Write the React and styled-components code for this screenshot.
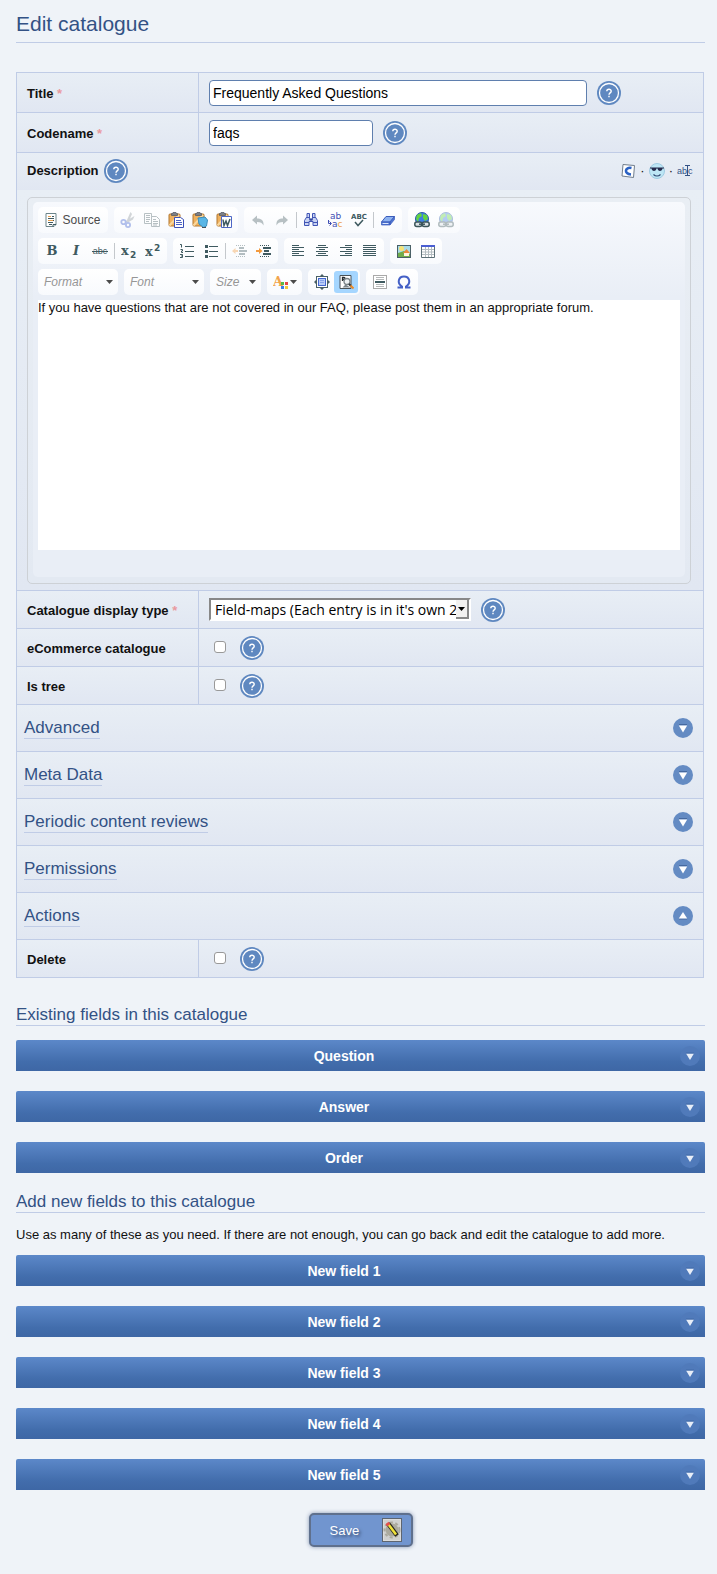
import React from 'react';
import styled, { createGlobalStyle } from 'styled-components';

const GlobalStyle = createGlobalStyle`
  *, *::before, *::after { box-sizing: border-box; }
  body {
    margin: 0;
    background: #eff3f8;
    color: #111;
    font: 13px/16px "Liberation Sans", Arial, sans-serif;
  }
  button, input, select, textarea { font-family: inherit; }
`;

const rowFill = 'linear-gradient(#e8eef5, #e1e7f2)';
const line = '#c0cce6';

const Page = styled.main`
  padding: 12px 12px 26px 16px;
`;

const Heading = styled.h1`
  margin: 0 0 29px;
  padding-bottom: 6px;
  border-bottom: 1px solid ${line};
  color: #335285;
  font-size: 21px;
  line-height: 24px;
  font-weight: 400;
`;

const SubHeading = styled.h2`
  margin: 0;
  border-bottom: 1px solid ${line};
  color: #335285;
  font-size: 17px;
  line-height: 20px;
  font-weight: 400;
`;

const FormPanel = styled.div`
  margin-right: 1px;
  border: 1px solid ${line};
  border-bottom: 0;
`;

const FormRow = styled.div`
  display: grid;
  grid-template-columns: 182px minmax(0, 1fr);
  min-height: ${(p) => (p.$tall ? 40 : 38)}px;
  border-bottom: 1px solid ${line};
  background: ${rowFill};
`;

const LabelCell = styled.div`
  display: flex;
  align-items: center;
  padding: 2px 0 0 10px;
  border-right: 1px solid ${line};
`;

const Label = styled.label`
  font-weight: 700;
`;

const Required = styled.span`
  color: #e99a9f;
`;

const FieldCell = styled.div`
  display: flex;
  align-items: center;
  gap: ${(p) => (p.$check ? 14 : 10)}px;
  padding: 0 ${(p) => (p.$check ? 15 : 10)}px;
`;

const TextInput = styled.input`
  width: ${(p) => p.$width};
  height: 26px;
  padding: 0 3px;
  border: 1px solid #5f7fae;
  border-radius: 4px;
  background: #fff;
  color: #000;
  font-size: 14px;
`;

const Checkbox = styled.input`
  appearance: none;
  width: 12px;
  height: 12px;
  margin: 0 0 2px;
  border: 1px solid #999;
  border-radius: 3px;
  background: #fff;
  &:checked { background: #5f88c0; }
`;

const IconButton = styled.button`
  display: flex;
  padding: 0;
  border: 0;
  background: none;
  cursor: pointer;
`;

const SelectBox = styled.div`
  position: relative;
  width: 262px;
  height: 23px;
`;

const Select = styled.select`
  appearance: none;
  display: block;
  width: 100%;
  height: 100%;
  padding: 0 13px 0 4px;
  border: 2px solid;
  border-color: #888 #fff #fff #888;
  border-radius: 0;
  background: #fff;
  color: #000;
  font: 14px/18px "Open Sans", "Noto Sans", sans-serif;
`;

const SelectArrow = styled.span`
  position: absolute;
  top: 2px;
  right: 2px;
  display: flex;
  justify-content: center;
  width: 13px;
  height: 19px;
  padding-top: 7px;
  border-right: 2px solid #888;
  border-bottom: 2px solid #888;
  background: #f2f1f0;
  pointer-events: none;
`;

const DescriptionHead = styled.div`
  display: flex;
  align-items: center;
  gap: 5px;
  height: 37px;
  padding: 0 10px 1px;
  background: ${rowFill};
`;

const Extras = styled.div`
  display: flex;
  align-items: center;
  gap: 4px;
  margin-left: auto;
`;

const DescriptionBody = styled.div`
  padding: 7px 12px 6px 10px;
  border-bottom: 1px solid ${line};
  background: ${rowFill};
`;

const EditorFrame = styled.div`
  padding: 4px 5px 6px;
  border: 1px solid #cdd1d6;
  border-radius: 5px;
  background: linear-gradient(#e9eef4, #e3e9f2);
`;

const EditorInner = styled.div`
  padding: 5px 5px 27px;
  border-radius: 5px;
  background: linear-gradient(#f7f9fd, #e9eef6 95px);
`;

const ToolbarRow = styled.div`
  display: flex;
  gap: 6px;
  margin-bottom: 5px;
`;

const ToolGroup = styled.div`
  display: flex;
  align-items: center;
  height: 26px;
  padding: 2px;
  border-radius: 5px;
  background: linear-gradient(#fff, #f8fafd);
`;

const Tool = styled.button`
  display: flex;
  align-items: center;
  justify-content: center;
  gap: ${(p) => p.$gap || 0}px;
  width: ${(p) => p.$width || 24}px;
  height: 22px;
  padding: 0;
  border: 0;
  border-radius: 3px;
  background: ${(p) => (p.$on ? '#a5d6ff' : 'none')};
  color: #4b4b4b;
  font-size: 12px;
  cursor: pointer;
  & > svg { opacity: ${(p) => (p.$dim ? 0.38 : 1)}; }
`;

const Separator = styled.span`
  width: 1px;
  height: 16px;
  margin: 0 2px;
  background: #c4c8cc;
`;

const Combo = styled.button`
  display: flex;
  align-items: center;
  justify-content: space-between;
  width: ${(p) => p.$width}px;
  height: 26px;
  padding: 0 5px 0 6px;
  border: 0;
  border-radius: 5px;
  background: linear-gradient(#fff, #f8fafd);
  color: #969696;
  font-size: 12px;
  font-style: italic;
`;

const EditorText = styled.textarea`
  display: block;
  width: 100%;
  height: 250px;
  padding: 0;
  border: 0;
  outline: 0;
  resize: none;
  background: #fff;
  color: #111;
  font-size: 13px;
  line-height: 16px;
`;

const SectionRow = styled.div`
  display: flex;
  align-items: center;
  justify-content: space-between;
  height: 47px;
  padding: 0 10px 0 7px;
  border-bottom: 1px solid ${line};
  background: ${rowFill};
`;

const SectionLink = styled.a`
  border-bottom: 1px solid ${line};
  color: #335285;
  font-size: 17px;
  line-height: 20px;
  text-decoration: none;
`;

const FieldSection = styled.section`
  margin-top: ${(p) => p.$top}px;
`;

const Note = styled.p`
  margin: 14px 0 12px;
`;

const FieldList = styled.div`
  display: flex;
  flex-direction: column;
  gap: 20px;
  margin-top: ${(p) => p.$top || 0}px;
`;

const FieldBar = styled.button`
  display: flex;
  align-items: center;
  height: 31px;
  padding: 0 5px 0 0;
  border: 0;
  border-radius: 2px 2px 0 0;
  background: linear-gradient(#5c88c9, #426dac 70%, #3e67a5);
  color: #fff;
  font-size: 14px;
  font-weight: 700;
  cursor: pointer;
`;

const FieldName = styled.span`
  flex: 1;
  margin-right: 8px;
  text-align: center;
`;

const Actions = styled.div`
  display: flex;
  justify-content: center;
  padding-top: 23px;
`;

const SaveButton = styled.button`
  display: flex;
  align-items: center;
  justify-content: space-between;
  width: 104px;
  height: 34px;
  padding: 0 9px 0 19px;
  border: 2px solid #5f708d;
  border-radius: 5px;
  background: #7195cf;
  box-shadow: 0 0 4px #8797b4;
  color: #fff;
  font-size: 13px;
  text-shadow: 2px 2px 3px #3c5075;
  cursor: pointer;
`;

const Svg = ({ w = 16, h = 16, children, ...rest }) => (
  <svg width={w} height={h} viewBox={`0 0 ${w} ${h}`} aria-hidden="true" {...rest}>
    {children}
  </svg>
);

/* A stroke drawing on the 16px grid, kept crisp for horizontal lines. */
const Lines = ({ d, color = '#3f5a60', width = 1 }) => (
  <path d={d} stroke={color} strokeWidth={width} fill="none" />
);

const HelpIcon = () => (
  <Svg w={24} h={24}>
    <circle cx="12" cy="12" r="12" fill="#5f88c0" />
    <circle cx="12" cy="12" r="9.5" fill="#5f88c0" stroke="#fff" strokeWidth="1.3" />
    <path d="M9.800 10.300c0-2.700 4.400-2.600 4.400-.1 0 1.700-2.200 1.700-2.200 3.500M12 14.800v1.500" stroke="#fff" strokeWidth="1.400" fill="none" />
  </Svg>
);

const Help = ({ about }) => (
  <IconButton type="button" aria-label={`Help: ${about}`}>
    <HelpIcon />
  </IconButton>
);

const ArrowIcon = ({ up }) => (
  <Svg w={20} h={20}>
    <circle cx="10" cy="10" r="10" fill="#648bc3" />
    <path d={up ? 'M6 13h8' : 'M6 6.5h8'} stroke="#46699f" />
    <path d={up ? 'M10 6l4.200 6.500H5.800z' : 'M10 14.500L5.800 7.500h8.400z'} fill="#fff" />
  </Svg>
);

const BarArrow = () => (
  <Svg w={20} h={20}>
    <circle cx="10" cy="10" r="10" fill="#507aba" />
    <path d="M6 7.500h8L10 14z" fill="#e8eef8" />
    <path d="M6 7h8" stroke="#416aa8" />
  </Svg>
);

const Caret = () => (
  <Svg w={7} h={4}>
    <path d="M0 0h7L3.500 4z" fill="#4b4b4b" />
  </Svg>
);

const Clipboard = ({ children }) => (
  <Svg>
    <rect x="1" y="2" width="11" height="12" rx="1" fill="#efb15e" stroke="#b1762f" />
    <path d="M1.500 13.500L11 3" stroke="#f9d79d" strokeWidth="2" />
    <path d="M3.500 3.500h6v-2h-1l-.500-1h-3l-.500 1h-1z" fill="#7c7f86" stroke="#4f555d" strokeWidth=".7" />
    {children}
  </Svg>
);

const Globe = () => (
  <Svg>
    <circle cx="8" cy="7" r="6.500" fill="#3f7fe0" stroke="#2a58a6" />
    <path d="M3 3l4-2 1 3-3 2-1 4-2-3zM9 2l4 1 1 4-3 2-2-3z" fill="#63d43f" />
    <rect x=".8" y="10" width="7" height="4.500" rx="2" fill="#dce3e6" stroke="#3c5559" strokeWidth="1.500" />
    <rect x="8.200" y="10" width="7" height="4.500" rx="2" fill="#dce3e6" stroke="#3c5559" strokeWidth="1.500" />
    <path d="M5 12.200h6" stroke="#3c5559" strokeWidth="1.500" />
  </Svg>
);

const icons = {
  source: (
    <Svg w={12} h={16}>
      <path d="M1 1.500h10v11l-2 2H1z" fill="#fff" stroke="#6d858a" />
      <path d="M3 4.500h3M3 8.500h5" stroke="#e9a04e" />
      <path d="M7 4.500h2M3 6.500h6M8 8.500h1M3 10.500h5M4 12.500h3" stroke="#3f5a60" />
      <path d="M8 14.500v-2h3" fill="none" stroke="#3f5a60" />
    </Svg>
  ),
  cut: (
    <Svg>
      <path d="M10.500 0L7 8l1.500 2L12 2zM14.500 4L5 9.500l2 1.500 6-3.500z" fill="#8d979d" />
      <circle cx="3.500" cy="10" r="2.200" fill="none" stroke="#3c5fd0" strokeWidth="1.800" />
      <circle cx="8" cy="13" r="2.100" fill="none" stroke="#3c5fd0" strokeWidth="1.800" />
    </Svg>
  ),
  copy: (
    <Svg>
      <path d="M.5 1.500h7v10h-7z" fill="#fff" stroke="#4a6066" />
      <path d="M2 3.500h4M2 5.500h4M2 7.500h4M2 9.500h3" stroke="#4a6066" />
      <path d="M7.500 4.500h5l3 3v7h-8z" fill="#fff" stroke="#4a6066" />
      <path d="M9 7.500h3M9 9.500h5M9 11.500h5M9 13h4" stroke="#4a6066" />
    </Svg>
  ),
  paste: (
    <Clipboard>
      <path d="M6.500 5.500h6l3 2v8h-9z" fill="#fff" stroke="#3d52b8" />
      <path d="M8 8.500h5M8 10.500h6M8 12.500h6" stroke="#4c63c4" />
    </Clipboard>
  ),
  pasteText: (
    <Clipboard>
      <path d="M6 6l7-1 2.500 3-1 6-3 1.500L7 12z" fill="#59b6e6" stroke="#3b8cba" />
      <path d="M10 15.500h4" stroke="#45515a" />
    </Clipboard>
  ),
  pasteWord: (
    <Clipboard>
      <path d="M5.500 4.500h10v11h-10z" fill="#fff" stroke="#4c66c6" />
      <path d="M7 7.500l1 6 2-4.500 1.500 4.500L14 7" fill="none" stroke="#3f5a60" strokeWidth="1.500" />
    </Clipboard>
  ),
  undo: (
    <Svg>
      <path d="M2 8l5-4.500v3c4 0 7 1.500 6.500 7-1-2.500-3-3.500-6.500-3.500v2.500z" fill="#4a6066" />
    </Svg>
  ),
  redo: (
    <Svg>
      <path d="M14 8L9 3.500v3c-4 0-7 1.500-6.500 7 1-2.500 3-3.500 6.500-3.500v2.500z" fill="#4a6066" />
    </Svg>
  ),
  find: (
    <Svg>
      <path d="M4 1.500h2.500v4L7 8h2l.500-2.500v-4H12v3l2.500 4v5h-4.500v-4H6v4H1.500v-5L4 4.500z" fill="#c9d3f3" stroke="#4055b5" />
      <path d="M3.500 5.500h3.500M9 5.500h3.500M2 10.500h4M10 10.500h4" stroke="#4055b5" />
      <path d="M6.500 6.500h3v2h-3z" fill="#33489c" />
    </Svg>
  ),
  replace: (
    <Svg>
      <text x="3" y="7" fontFamily="DejaVu Sans" fontSize="9" fill="#3f4fb4">ab</text>
      <text x="5" y="15" fontFamily="DejaVu Sans" fontSize="9" fill="#3f4fb4">a<tspan fill="#eda24f">c</tspan></text>
      <path d="M1.500 8v3.500H4M2.500 9.500l2 2-2 2" stroke="#3f4fb4" fill="none" />
    </Svg>
  ),
  spell: (
    <Svg>
      <text x="8" y="7" textAnchor="middle" fontFamily="DejaVu Sans" fontWeight="700" fontSize="7" fill="#3f5a60">ABC</text>
      <path d="M4 10l3 3.500 5-5.500" stroke="#3f5a60" strokeWidth="1.500" fill="none" />
    </Svg>
  ),
  eraser: (
    <Svg>
      <path d="M1.500 10L6 4.500h8.500L10 10z" fill="#8db2f0" stroke="#3c5dbb" />
      <path d="M1.500 10H10v3H1.500zM10 10l4.500-5.500v3L10 13z" fill="#4d74d2" stroke="#3c5dbb" strokeWidth=".7" />
      <path d="M2.500 11.500h6" stroke="#dbe6fb" />
    </Svg>
  ),
  link: <Globe />,
  bold: (
    <Svg>
      <text x="8" y="12" textAnchor="middle" fontFamily="DejaVu Serif" fontWeight="700" fontSize="13" fill="#3f5a60">B</text>
    </Svg>
  ),
  italic: (
    <Svg>
      <text x="8" y="12" textAnchor="middle" fontFamily="DejaVu Serif" fontStyle="italic" fontWeight="700" fontSize="13" fill="#3f5a60">I</text>
    </Svg>
  ),
  strike: (
    <Svg>
      <text x="8" y="11" textAnchor="middle" fontFamily="Liberation Sans" fontSize="9" fill="#3f5a60">abc</text>
      <path d="M0 8.500h16" stroke="#3f5a60" />
    </Svg>
  ),
  sub: (
    <Svg>
      <text x="0" y="12" fontFamily="DejaVu Serif" fontWeight="700" fontSize="13" fill="#3f5a60">x</text>
      <text x="9" y="15" fontFamily="DejaVu Sans" fontWeight="700" fontSize="9" fill="#3f5a60">2</text>
    </Svg>
  ),
  sup: (
    <Svg>
      <text x="0" y="13" fontFamily="DejaVu Serif" fontWeight="700" fontSize="13" fill="#3f5a60">x</text>
      <text x="9" y="8" fontFamily="DejaVu Sans" fontWeight="700" fontSize="9" fill="#3f5a60">2</text>
    </Svg>
  ),
  numbered: (
    <Svg>
      <Lines d="M6 3.500h9M6 8.500h9M6 13.500h9" />
      <Lines d="M1 1.500h1.500v3M1.500 6.500h2v1.500h-1v1.500h1.500M1 11.500h2.500v3H1M2 13h1" />
    </Svg>
  ),
  bullets: (
    <Svg>
      <Lines d="M6 3.500h9M6 8.500h9M6 13.500h9" />
      <path d="M2 2h3v3H2zM2 7h3v3H2zM2 12h3v3H2z" fill="#3f5a60" />
    </Svg>
  ),
  outdent: (
    <Svg>
      <path d="M4 2.500h10M4 13.500h10" stroke="#3f5a60" strokeDasharray="1 1" />
      <path d="M7 5h5M7 8h8M7 11h6" stroke="#3f5a60" strokeWidth="2" />
      <path d="M0 8l3.500-3v2H6v2H3.500v2z" fill="#f39a3d" />
    </Svg>
  ),
  indent: (
    <Svg>
      <path d="M4 2.500h10M4 13.500h10" stroke="#3f5a60" strokeDasharray="1 1" />
      <path d="M7 5h8M8 8h5M7 11h8" stroke="#3f5a60" strokeWidth="2" />
      <path d="M6.500 8L3 5v2H0v2h3v2z" fill="#f39a3d" />
    </Svg>
  ),
  left: <Svg><Lines d="M2 2.500h7M2 4.500h12M2 6.500h7M2 8.500h12M2 10.500h7M2 12.500h12" /></Svg>,
  center: <Svg><Lines d="M4 2.500h8M2 4.500h12M5 6.500h6M2 8.500h12M4 10.500h8M2 12.500h12" /></Svg>,
  right: <Svg><Lines d="M7 2.500h7M2 4.500h12M8 6.500h6M2 8.500h12M7 10.500h7M2 12.500h12" /></Svg>,
  justify: <Svg><Lines d="M1 2.500h13M1 4.500h13M1 6.500h13M1 8.500h13M1 10.500h13M1 12.500h13" /></Svg>,
  image: (
    <Svg>
      <rect x="1.500" y="2.500" width="13" height="12" fill="#a9dbe8" stroke="#4a6066" />
      <circle cx="5.500" cy="5.500" r="2.500" fill="#f7e477" />
      <path d="M2 10l6-2 6 3v3H2z" fill="#6fac4a" />
      <path d="M8 10h5v3H8z" fill="#fff4dc" />
      <path d="M7 10l3.500-4L14 10z" fill="#e8883b" />
    </Svg>
  ),
  table: (
    <Svg>
      <rect x="1.500" y="2.500" width="13" height="12" fill="#fff" />
      <path d="M2 6.500h12M2 9h12M2 11.500h12M5.500 4v10M8.500 4v10M11.500 4v10" fill="none" stroke="#b4bdc1" />
      <path d="M1.500 3v11.500h13V3" fill="none" stroke="#5d7077" />
      <path d="M1 3h14" stroke="#4b5fd2" strokeWidth="2" />
    </Svg>
  ),
  color: (
    <Svg>
      <text x="0" y="12" fontFamily="DejaVu Serif" fontWeight="700" fontSize="13" fill="#f2a44b">A</text>
      <path d="M8 8h3v3H8z" fill="#5bb945" />
      <path d="M12 8h3v3h-3z" fill="#e84545" />
      <path d="M8 12h3v3H8z" fill="#3e7bea" />
      <path d="M12 12h3v3h-3z" fill="#f6c73b" />
    </Svg>
  ),
  maximize: (
    <Svg>
      <rect x="2.500" y="2.500" width="11" height="11" fill="#fff" stroke="#4a6066" />
      <rect x="4.500" y="4.500" width="7" height="7" fill="#b9ccf8" stroke="#4367ce" />
      <path d="M6 6.500h4M6 8.500h4" stroke="#86a3ea" />
      <path d="M8 0l2.500 2.500h-5zM8 16l2.500-2.500h-5zM0 8l2.500-2.500v5zM16 8l-2.500-2.500v5z" fill="#4a6066" />
    </Svg>
  ),
  blocks: (
    <Svg>
      <path d="M2 1.500h11v13H2z" fill="#fff" stroke="#4a5358" />
      <path d="M4.500 7V3.500h1.500a1 1 0 010 2H4.500" fill="none" stroke="#252b2e" strokeWidth="1.300" />
      <path d="M4.500 13.500l3-3 5 3z" fill="#7c868b" />
      <circle cx="9" cy="7.500" r="3" fill="#eef2f4" stroke="#7a8387" strokeWidth="1.300" />
      <path d="M11 10l2 2" stroke="#2f3538" strokeWidth="2" />
      <path d="M12.500 11.500l3 3" stroke="#e88a2c" strokeWidth="2" />
    </Svg>
  ),
  rule: (
    <Svg>
      <rect x="1.500" y="1.500" width="13" height="13" fill="#fff" stroke="#a9a9a9" />
      <path d="M4 3.500h8M4 5.500h8M4 10.500h8M4 12.500h8" stroke="#b5b8b9" />
      <path d="M3 8h10" stroke="#3f5a60" strokeWidth="2" />
    </Svg>
  ),
  omega: (
    <Svg>
      <path d="M1.500 13.500H6v-1C.5 9 2.500 2.500 8 2.500S15.500 9 10 12.500v1h4.500" fill="none" stroke="#4460c6" strokeWidth="2" />
    </Svg>
  ),
};

const ComcodeIcon = () => (
  <Svg>
    <path d="M3 1.500l11.500 1-1 12L2 13z" fill="#fff" stroke="#707d8c" />
    <path d="M11.500 5C5 3.500 3.500 11 11 11.500" fill="none" stroke="#2b62c4" strokeWidth="2.600" />
  </Svg>
);

const EmoticonIcon = () => (
  <Svg>
    <circle cx="8" cy="8" r="7.500" fill="#bde6f5" stroke="#9fcbe2" />
    <path d="M1 5h14" stroke="#252a4d" />
    <path d="M2.500 5h5c0 4-5 4-5 0zM8.500 5h5c0 4-5 4-5 0z" fill="#252a4d" />
    <path d="M4.500 11.500c2 2 5 2 7 0" fill="none" stroke="#2d4670" strokeWidth="1.200" />
  </Svg>
);

const TextEditIcon = () => (
  <Svg>
    <text x="0" y="11" fontFamily="Liberation Sans" fontSize="9" fill="#335285">ab</text>
    <text x="11" y="11" fontFamily="Liberation Sans" fontSize="9" fill="#335285">c</text>
    <path d="M8 2.500h5M8 12.500h5M10.500 2.500v10" stroke="#335285" />
  </Svg>
);

const SaveIcon = () => (
  <Svg w={20} h={24}>
    <rect x=".5" y=".5" width="19" height="23" fill="#dcdcdc" stroke="#5e6570" />
    <path d="M2 2h16v20H2z" fill="#cfd0cf" />
    <circle cx="10" cy="12" r="6.500" fill="#aaa99d" />
    <circle cx="10" cy="12" r="7.500" fill="none" stroke="#aaa99d" strokeWidth="2" strokeDasharray="3 2.500" />
    <path d="M6 5.500l9 12" stroke="#27261d" strokeWidth="4.500" />
    <path d="M6.500 6.500l7.500 10" stroke="#f0e23a" strokeWidth="2.500" />
    <path d="M5 5l1.800 2.200" stroke="#e2504c" strokeWidth="4" />
  </Svg>
);

const toolRows = [
  [
    [['cut', 'Cut', 'dim'], ['copy', 'Copy', 'dim'], ['paste', 'Paste'], ['pasteText', 'Paste as plain text'], ['pasteWord', 'Paste from Word']],
    [['undo', 'Undo', 'dim'], ['redo', 'Redo', 'dim'], null, ['find', 'Find'], ['replace', 'Replace'], ['spell', 'Check spelling'], null, ['eraser', 'Remove format']],
    [['link', 'Link'], ['link', 'Unlink', 'dim']],
  ],
  [
    [['bold', 'Bold'], ['italic', 'Italic'], ['strike', 'Strike through'], null, ['sub', 'Subscript'], ['sup', 'Superscript']],
    [['numbered', 'Numbered list'], ['bullets', 'Bulleted list'], null, ['outdent', 'Decrease indent', 'dim'], ['indent', 'Increase indent']],
    [['left', 'Align left'], ['center', 'Centre'], ['right', 'Align right'], ['justify', 'Justify']],
    [['image', 'Image'], ['table', 'Table']],
  ],
  [
    [['maximize', 'Maximize'], ['blocks', 'Show blocks', 'on']],
    [['rule', 'Horizontal line'], ['omega', 'Special character']],
  ],
];

const Tools = ({ groups }) =>
  groups.map((group, g) => (
    <ToolGroup key={g}>
      {group.map((item, i) =>
        item ? (
          <Tool key={i} type="button" aria-label={item[1]} $dim={item[2] === 'dim'} $on={item[2] === 'on'}>
            {icons[item[0]]}
          </Tool>
        ) : (
          <Separator key={i} />
        )
      )}
    </ToolGroup>
  ));

const Editor = () => (
  <EditorFrame>
    <EditorInner>
      <ToolbarRow>
        <ToolGroup>
          <Tool type="button" $width={66} $gap={5}>{icons.source}Source</Tool>
        </ToolGroup>
        <Tools groups={toolRows[0]} />
      </ToolbarRow>
      <ToolbarRow>
        <Tools groups={toolRows[1]} />
      </ToolbarRow>
      <ToolbarRow>
        <Combo type="button" $width={80}>Format<Caret /></Combo>
        <Combo type="button" $width={80}>Font<Caret /></Combo>
        <Combo type="button" $width={51}>Size<Caret /></Combo>
        <ToolGroup>
          <Tool type="button" aria-label="Text colour" $width={31} $gap={1}>
            {icons.color}
            <Caret />
          </Tool>
        </ToolGroup>
        <Tools groups={toolRows[2]} />
      </ToolbarRow>
      <EditorText
        id="description"
        defaultValue="If you have questions that are not covered in our FAQ, please post them in an appropriate forum."
      />
    </EditorInner>
  </EditorFrame>
);

const Field = ({ id, label, required, tall, check, children }) => (
  <FormRow $tall={tall}>
    <LabelCell>
      <Label htmlFor={id}>
        {label}
        {required && <Required> *</Required>}
      </Label>
    </LabelCell>
    <FieldCell $check={check}>
      {check ? <Checkbox id={id} type="checkbox" /> : children}
      <Help about={label} />
    </FieldCell>
  </FormRow>
);

const Section = ({ title, open }) => (
  <SectionRow>
    <SectionLink href="#">{title}</SectionLink>
    <IconButton type="button" aria-label={`${open ? 'Collapse' : 'Expand'} ${title}`} aria-expanded={!!open}>
      <ArrowIcon up={open} />
    </IconButton>
  </SectionRow>
);

const Bars = ({ names, top }) => (
  <FieldList $top={top}>
    {names.map((name) => (
      <FieldBar key={name} type="button">
        <FieldName>{name}</FieldName>
        <BarArrow />
      </FieldBar>
    ))}
  </FieldList>
);

export default function App() {
  return (
    <Page>
      <GlobalStyle />
      <Heading>Edit catalogue</Heading>
      <form onSubmit={(e) => e.preventDefault()}>
        <FormPanel>
          <Field id="title" label="Title" required tall>
            <TextInput id="title" type="text" $width="78%" defaultValue="Frequently Asked Questions" />
          </Field>
          <Field id="codename" label="Codename" required tall>
            <TextInput id="codename" type="text" $width="164px" defaultValue="faqs" />
          </Field>
          <DescriptionHead>
            <Label htmlFor="description">Description</Label>
            <Help about="Description" />
            <Extras>
              <IconButton type="button" aria-label="Comcode"><ComcodeIcon /></IconButton>·
              <IconButton type="button" aria-label="Emoticons"><EmoticonIcon /></IconButton>·
              <IconButton type="button" aria-label="Toggle editor"><TextEditIcon /></IconButton>
            </Extras>
          </DescriptionHead>
          <DescriptionBody>
            <Editor />
          </DescriptionBody>
          <Field id="display" label="Catalogue display type" required>
            <SelectBox>
              <Select id="display">
                <option>Field-maps (Each entry is in it's own 2-column table)</option>
              </Select>
              <SelectArrow>
                <Svg w={7} h={4}><path d="M0 0h7L3.500 4z" fill="#000" /></Svg>
              </SelectArrow>
            </SelectBox>
          </Field>
          <Field id="ecommerce" label="eCommerce catalogue" check />
          <Field id="tree" label="Is tree" check />
          <Section title="Advanced" />
          <Section title="Meta Data" />
          <Section title="Periodic content reviews" />
          <Section title="Permissions" />
          <Section title="Actions" open />
          <Field id="delete" label="Delete" check />
        </FormPanel>

        <FieldSection $top={27}>
          <SubHeading>Existing fields in this catalogue</SubHeading>
          <Bars top={14} names={['Question', 'Answer', 'Order']} />
        </FieldSection>

        <FieldSection $top={19}>
          <SubHeading>Add new fields to this catalogue</SubHeading>
          <Note>Use as many of these as you need. If there are not enough, you can go back and edit the catalogue to add more.</Note>
          <Bars names={['New field 1', 'New field 2', 'New field 3', 'New field 4', 'New field 5']} />
        </FieldSection>

        <Actions>
          <SaveButton type="submit">
            Save
            <SaveIcon />
          </SaveButton>
        </Actions>
      </form>
    </Page>
  );
}
